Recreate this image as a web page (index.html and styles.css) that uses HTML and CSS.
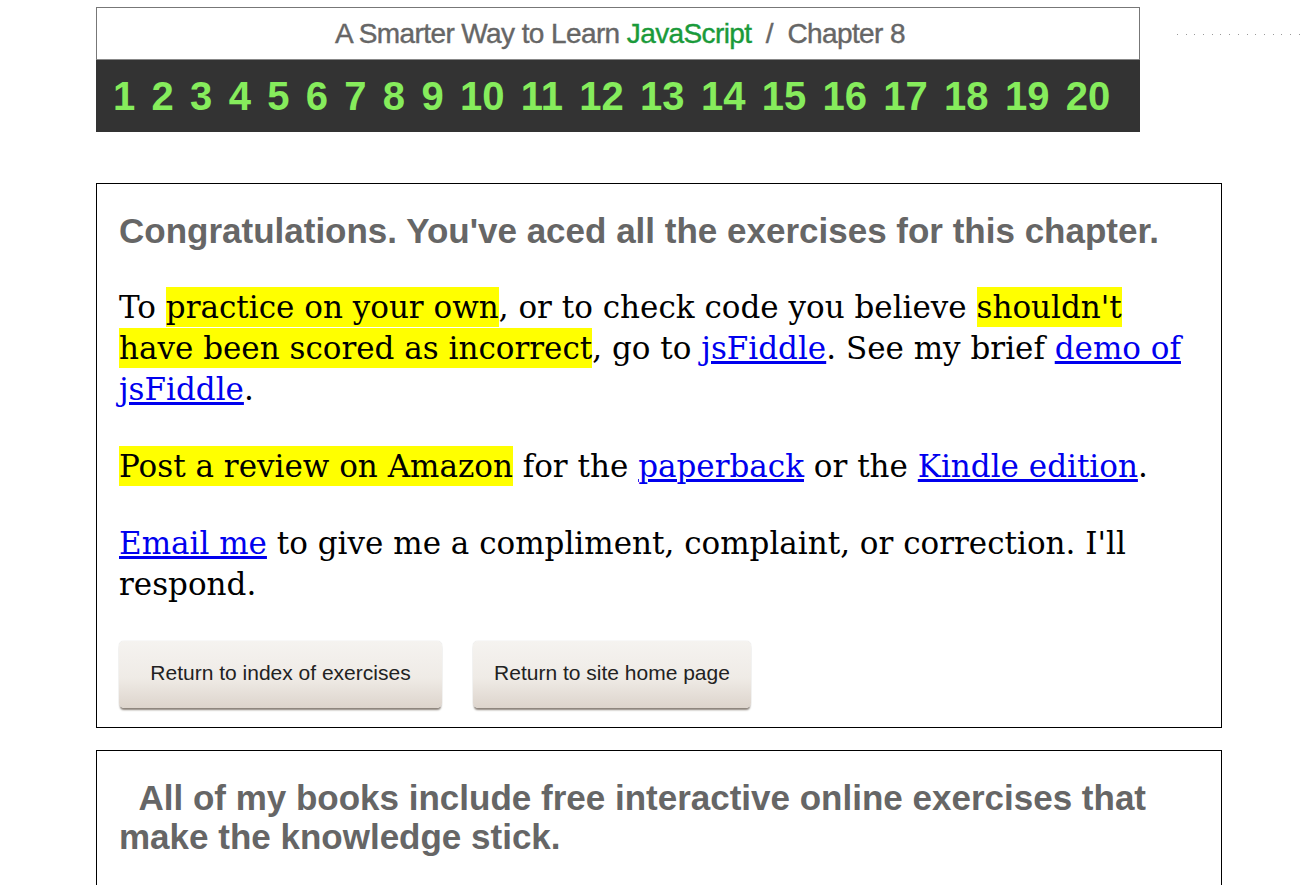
FILE: index.html
```html
<!DOCTYPE html>
<html>
<head>
<meta charset="utf-8">
<link rel="stylesheet" href="styles.css">
</head>
<body>
<div class="top">
  <div class="banner">
    <div class="banner-title"><span>A Smarter Way to Learn <span class="js">JavaScript</span>&nbsp; / &nbsp;Chapter 8</span></div>
    <div class="banner-nums">
      <span>1</span><span>2</span><span>3</span><span>4</span><span>5</span><span>6</span><span>7</span><span>8</span><span>9</span><span>10</span><span>11</span><span>12</span><span>13</span><span>14</span><span>15</span><span>16</span><span>17</span><span>18</span><span>19</span><span>20</span>
    </div>
  </div>
  <div class="dots"></div>
</div>

<div class="box main">
  <h2 class="head">Congratulations. You've aced all the exercises for this chapter.</h2>
  <p class="txt">To <span class="hl">practice on your own</span>, or to check code you believe <span class="hl">shouldn't have been scored as incorrect</span>, go to <a href="#">jsFiddle</a>. See my brief <a href="#">demo of jsFiddle</a>.</p>
  <p class="txt"><span class="hl">Post a review on Amazon</span> for the <a href="#">paperback</a> or the <a href="#">Kindle edition</a>.</p>
  <p class="txt"><a href="#">Email me</a> to give me a compliment, complaint, or correction. I'll respond.</p>
  <div class="buttons">
    <div class="btn b1">Return to index of exercises</div>
    <div class="btn b2">Return to site home page</div>
  </div>
</div>

<div class="box second">
  <h2 class="head head2">&nbsp;&nbsp;All of my books include free interactive online exercises that make the knowledge stick.</h2>
</div>
</body>
</html>
```
FILE: styles.css
```css
html, body { margin: 0; padding: 0; background: #fff; }
body { padding: 7px 0 0 96px; }

.top { display: flex; align-items: flex-start; }
.banner { width: 1044px; height: 125px; display: flex; flex-direction: column; flex-shrink: 0; }
.banner-title {
  height: 53px; box-sizing: border-box;
  border: 1px solid #777; border-bottom: 1px solid #888;
  background: #fff;
  font-family: "Liberation Sans", Arial, sans-serif;
  font-size: 28px; color: #666; letter-spacing: -0.6px;
  -webkit-text-stroke: 0.4px #666;
  display: flex; align-items: center; justify-content: center;
  padding-left: 4px;
}
.banner-title .js { color: #1a9a3a; -webkit-text-stroke: 0.4px #1a9a3a; }
.banner-nums {
  flex: 1; background: #333;
  display: flex; align-items: center;
  padding-left: 17px; gap: 16.3px;
  font-family: "Liberation Sans", Arial, sans-serif;
  font-weight: bold;
  font-size: 40px; color: #86ec5c;
}
.dots {
  flex-shrink: 0;
  margin: 27px 0 0 37px;
  width: 124px; height: 1px;
  background: repeating-linear-gradient(90deg, #999 0 1px, transparent 1px 8.7px);
}

.box { border: 1px solid #000; box-sizing: border-box; width: 1126px; padding: 0 22px; }
.main { margin-top: 51px; padding-top: 27px; padding-bottom: 19px; }
.head {
  margin: 0;
  font-family: "Liberation Sans", Arial, sans-serif;
  font-weight: bold; font-size: 35px; color: #666; line-height: 40px;
}
.txt {
  margin: 36px 0 0 0;
  font-family: "DejaVu Serif", Georgia, serif;
  font-size: 31px; line-height: 41px; color: #000;
}
.hl { background: #ff0; padding: 2px 0; }
a { color: #00e; text-decoration: underline; }

.buttons { display: flex; gap: 31px; margin-top: 36px; }
.btn {
  height: 67px; box-sizing: border-box;
  display: flex; align-items: center; justify-content: center;
  font-family: "Liberation Sans", Arial, sans-serif; font-size: 21px; color: #222;
  border-radius: 5px;
  background: linear-gradient(#f5f3f0, #efebe6 55%, #ddd4cc);
  box-shadow: 0 3px 2px -1px #8a8078, 0 0 1px #bbb;
  padding-bottom: 4px;
}
.b1 { width: 323px; }
.b2 { width: 278px; }

.second { margin-top: 22px; padding-top: 27px; height: 140px; }
.head2 { line-height: 39px; }
```
